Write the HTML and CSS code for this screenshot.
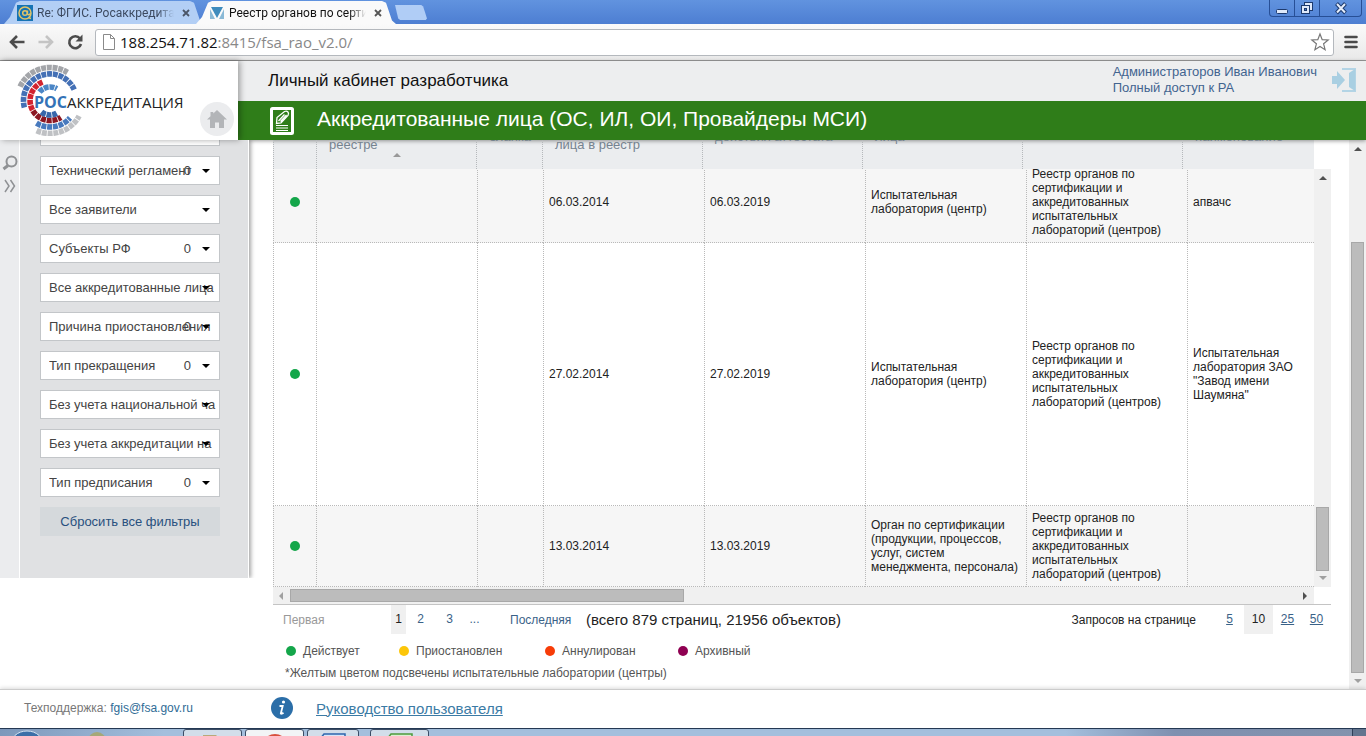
FILE: index.html
```html
<!DOCTYPE html>
<html lang="ru">
<head>
<meta charset="utf-8">
<title>Реестр органов по сертификации</title>
<link rel="stylesheet" href="styles.css">
</head>
<body>
<div class="tabstrip">
  <div class="tab">
    <svg class="tab-icon" viewBox="0 0 16 16"><rect width="16" height="16" fill="#1673b4"/><circle cx="8" cy="8" r="6" fill="none" stroke="#e0c46a" stroke-width="1.5"/><circle cx="8" cy="8" r="2.3" fill="none" stroke="#e0c46a" stroke-width="1.5"/><path d="M10.5 5.5v3.5q1.5 2 3-1M11 12.5l3 1" fill="none" stroke="#e0c46a" stroke-width="1.4"/></svg>
    <span class="tab-title">Re: ФГИС. Росаккредитация</span>
    <button class="tab-close" aria-label="Закрыть вкладку"><svg viewBox="0 0 8 8"><path d="M1 1l6 6M7 1l-6 6" stroke="#4b5668" stroke-width="1.8"/></svg></button>
  </div>
  <div class="tab tab-active">
    <svg class="tab-icon" viewBox="0 0 16 16"><path d="M2 2h12L8 13z" fill="#3f8cbd"/><path d="M1 4l5 10H1zM15 4l-5 10h5z" fill="#8ab9d6"/></svg>
    <span class="tab-title">Реестр органов по сертификации</span>
    <button class="tab-close" aria-label="Закрыть вкладку"><svg viewBox="0 0 8 8"><path d="M1 1l6 6M7 1l-6 6" stroke="#555" stroke-width="1.8"/></svg></button>
  </div>
  <button class="tab-new" aria-label="Новая вкладка"></button>
  <div class="window-buttons">
    <button aria-label="Свернуть"><svg viewBox="0 0 14 14"><rect x="1.5" y="8.500" width="11" height="4" rx="1" fill="#dfe9fa" stroke="#1d3a6e"/></svg></button>
    <button aria-label="Развернуть"><svg viewBox="0 0 14 14"><rect x="4.500" y="1.500" width="8" height="8" fill="#dfe9fa" stroke="#1d3a6e"/><rect x="1.500" y="4.500" width="8" height="8" fill="#dfe9fa" stroke="#1d3a6e"/><rect x="4.500" y="7.500" width="2" height="2" fill="#4b7ccf" stroke="#1d3a6e"/></svg></button>
    <button class="window-close" aria-label="Закрыть"><svg viewBox="0 0 14 14"><path d="M2.500 2.500l9 9.500M11.500 2.500l-9 9.500" stroke="#1d3a6e" stroke-width="4"/><path d="M3 3l8 8.500M11 3l-8 8.500" stroke="#e4edfb" stroke-width="2"/></svg></button>
  </div>
</div>
<div class="toolbar">
  <button class="nav-button" aria-label="Назад"><svg viewBox="0 0 18 18"><path d="M16.500 9H3.500M9 3L3 9l6 6" fill="none" stroke="#4c4c4c" stroke-width="2.600"/></svg></button>
  <button class="nav-button" aria-label="Вперёд"><svg viewBox="0 0 18 18"><path d="M1.500 9h13M9 3l6 6-6 6" fill="none" stroke="#c4c4c4" stroke-width="2.600"/></svg></button>
  <button class="nav-button" aria-label="Обновить"><svg viewBox="0 0 18 18"><path d="M14 5.500A6 6 0 1 0 15 11" fill="none" stroke="#4c4c4c" stroke-width="2.600"/><path d="M16.500 1.500v7h-7z" fill="#4c4c4c"/></svg></button>
  <div class="address">
    <svg class="address-page" viewBox="0 0 12 16"><path d="M.5.500h7l4 4v11H.500zM7.500.500v4h4" fill="#fff" stroke="#8a8a8a"/></svg>
    <a class="address-url" href="#"><span class="address-host">188.254.71.82</span>:8415/fsa_rao_v2.0/</a>
    <svg class="address-star" viewBox="0 0 20 20"><path d="M10 2l2.200 5.600 6 .4-4.600 3.800 1.500 5.900L10 14.500l-5.100 3.200 1.500-5.900L1.800 8l6-.4z" fill="#fff" stroke="#777" stroke-width="1.200"/></svg>
  </div>
  <button class="menu-button" aria-label="Меню"><svg viewBox="0 0 14 14"><path d="M1.500 2h11M1.500 7h11M1.500 12h11" stroke="#4a4a4a" stroke-width="2.600" stroke-linecap="round"/></svg></button>
</div>

<header class="header">
  <div class="brand">
    <a class="logo" href="#">
      <svg class="logo-mark" viewBox="3 0 74 72">
        <g fill="none" stroke-width="5.600" stroke-dasharray="4.900 .8">
          <path d="M9.100 22.600A33 33 0 0 1 56.500 8.500" stroke="#a3a5a9"/>
          <path d="M13.400 43.400A26.500 26.500 0 0 1 63.200 25.700" stroke="#4470b5"/>
          <path d="M31.500 18A20 20 0 0 0 21.900 46.800" stroke="#d2232f"/>
          <path d="M21.900 46.800A20 20 0 0 0 49.900 53.300" stroke="#8c1722"/>
          <path d="M28.500 28A13.500 13.500 0 0 1 45.800 24.800" stroke="#4b86c6"/>
          <path d="M30.500 48A13.500 13.500 0 0 0 45.700 49.200" stroke="#3767ab"/>
          <path d="M25.400 59.200A26.500 26.500 0 0 0 59 53.900" stroke="#4779bd"/>
          <path d="M25.600 66.600A33 33 0 0 0 68.100 52" stroke="#bfc1c4"/>
        </g>
      </svg>
      <span class="logo-text"><b>РОС</b>АККРЕДИТАЦИЯ</span>
    </a>
    <a class="home" href="#" aria-label="На главную"><svg viewBox="0 0 20 18"><path d="M10 0l10 9.500h-3V18h-5v-5.500H8V18H3V9.500H0L3.500 6.200V2h2.800v1.500z" fill="#b3b5b8"/></svg></a>
  </div>
  <div class="header-main">
    <div class="cabinet">
      <span class="cabinet-title">Личный кабинет разработчика</span>
      <div class="user">
        <div class="user-text"><a href="#">Администраторов Иван Иванович</a><a href="#">Полный доступ к РА</a></div>
        <a class="logout" href="#" aria-label="Выход"><svg viewBox="0 0 24 24"><path d="M0 8h5V3l8 9-8 9v-5H0z" fill="#a9cfe2"/><path d="M10 1h13v22H10" fill="none" stroke="#b3d4e5" stroke-width="2"/><path d="M17 5l6-4v22l-6-4z" fill="#a9cfe2"/></svg></a>
      </div>
    </div>
    <div class="titlebar">
      <svg class="titlebar-icon" viewBox="0 0 24 28"><rect x="1.500" y="1.500" width="21" height="25" rx="1" fill="none" stroke="#fff" stroke-width="3"/><path d="M6.500 16.500l.5-6L14.500 4.500c3-1 5 1 3.500 4l-7 7.500zM8.500 14l6-6.500M10.500 14.500l6-6.500" fill="none" stroke="#fff" stroke-width="1.300"/><path d="M6 18.500h12M6 21h12M6 23.500h12" stroke="#fff" stroke-width="1.200"/></svg>
      <h1>Аккредитованные лица (ОС, ИЛ, ОИ, Провайдеры МСИ)</h1>
    </div>
  </div>
</header>

<div class="body">
  <aside class="sidebar">
    <div class="rail">
      <button aria-label="Поиск"><svg viewBox="0 0 16 16"><circle cx="9.500" cy="6.500" r="5" fill="none" stroke="#8f9194" stroke-width="2"/><path d="M6 10.500L1.500 14" stroke="#8f9194" stroke-width="3"/></svg></button>
      <button aria-label="Развернуть панель"><svg viewBox="0 0 16 16"><path d="M3 2l4 6-4 6M8.500 2l4 6-4 6" fill="none" stroke="#8f9194" stroke-width="1.500"/></svg></button>
    </div>
    <form class="filters">
      <div class="filter"><select aria-label="Фильтр"><option></option></select></div>
      <div class="filter"><select aria-label="Технический регламент"><option>Технический регламент</option></select><span class="count">0</span><i class="arrow"></i></div>
      <div class="filter"><select aria-label="Заявители"><option>Все заявители</option></select><i class="arrow"></i></div>
      <div class="filter"><select aria-label="Субъекты РФ"><option>Субъекты РФ</option></select><span class="count">0</span><i class="arrow"></i></div>
      <div class="filter"><select aria-label="Аккредитованные лица"><option>Все аккредитованные лица</option></select><i class="arrow"></i></div>
      <div class="filter"><select aria-label="Причина приостановления"><option>Причина приостановления</option></select><span class="count">0</span><i class="arrow"></i></div>
      <div class="filter"><select aria-label="Тип прекращения"><option>Тип прекращения</option></select><span class="count">0</span><i class="arrow"></i></div>
      <div class="filter"><select aria-label="Национальная часть"><option>Без учета национальной ча</option></select><i class="arrow"></i></div>
      <div class="filter"><select aria-label="Аккредитация"><option>Без учета аккредитации на</option></select><i class="arrow"></i></div>
      <div class="filter"><select aria-label="Тип предписания"><option>Тип предписания</option></select><span class="count">0</span><i class="arrow"></i></div>
      <button class="reset" type="button">Сбросить все фильтры</button>
    </form>
  </aside>

  <main class="main">
    <div class="grid">
      <div class="grid-head">
        <table class="head-table">
          <colgroup><col class="h-dot"><col class="h-wide"><col class="h-blank"><col class="h-wide"><col class="h-wide"><col class="h-wide"><col class="h-wide"><col></colgroup>
          <thead><tr>
            <th></th>
            <th><br><br>реестре<i class="sort"></i></th>
            <th><br>бланка</th>
            <th><br><br>лица в реестр</th>
            <th><br>действия аттестата</th>
            <th><br>лица</th>
            <th></th>
            <th><br>наименование</th>
          </tr></thead>
        </table>
      </div>
      <div class="grid-middle">
        <table class="body-table">
          <colgroup><col class="b-dot"><col class="b-wide"><col class="b-blank"><col class="b-wide"><col class="b-wide"><col class="b-wide"><col class="b-wide"><col></colgroup>
          <tbody>
            <tr class="row-short"><td><i class="dot green"></i></td><td></td><td></td><td>06.03.2014</td><td>06.03.2019</td><td>Испытательная лаборатория (центр)</td><td>Реестр органов по сертификации и аккредитованных испытательных лабораторий (центров)</td><td>апвачс</td></tr>
            <tr class="row-tall"><td><i class="dot green"></i></td><td></td><td></td><td>27.02.2014</td><td>27.02.2019</td><td>Испытательная лаборатория (центр)</td><td>Реестр органов по сертификации и аккредитованных испытательных лабораторий (центров)</td><td>Испытательная лаборатория ЗАО "Завод имени Шаумяна"</td></tr>
            <tr class="row-last"><td><i class="dot green"></i></td><td></td><td></td><td>13.03.2014</td><td>13.03.2019</td><td>Орган по сертификации (продукции, процессов, услуг, систем менеджмента, персонала)</td><td>Реестр органов по сертификации и аккредитованных испытательных лабораторий (центров)</td><td></td></tr>
          </tbody>
        </table>
        <div class="vscroll"><i class="up"></i><span class="vspace"></span><span class="grid-thumb"></span><i class="down"></i></div>
      </div>
      <div class="hscroll"><div class="htrack"><i class="left"></i><span class="hthumb"></span><i class="right"></i></div></div>
    </div>
    <div class="pager">
      <span class="first">Первая</span>
      <span class="page current">1</span><a class="page" href="#">2</a><a class="page" href="#">3</a><a class="page more" href="#">...</a>
      <a class="last" href="#">Последняя</a>
      <span class="total">(всего 879 страниц, 21956 объектов)</span>
      <div class="sizes"><span class="sizes-label">Запросов на странице</span><a href="#">5</a><span class="current">10</span><a href="#">25</a><a href="#">50</a></div>
    </div>
    <ul class="legend">
      <li class="w-one"><i class="dot green"></i>Действует</li>
      <li class="w-two"><i class="dot yellow"></i>Приостановлен</li>
      <li class="w-three"><i class="dot red"></i>Аннулирован</li>
      <li><i class="dot purple"></i>Архивный</li>
    </ul>
    <p class="note">*Желтым цветом подсвечены испытательные лаборатории (центры)</p>
  </main>
  <div class="vscroll page-scroll"><i class="up"></i><span class="page-space"></span><span class="page-thumb"></span><i class="down"></i></div>
</div>

<footer class="footer">
  <div class="support">Техподдержка: <a href="#">fgis@fsa.gov.ru</a></div>
  <svg class="info" viewBox="0 0 22 22"><circle cx="11" cy="11" r="11" fill="#2b6ea8"/><circle cx="12.500" cy="5" r="1.600" fill="#fff"/><path d="M8.500 9h3.200l-1.900 7.500q.5.800 2.700-.8" fill="none" stroke="#fff" stroke-width="1.800"/></svg>
  <a class="manual" href="#">Руководство пользователя</a>
</footer>
<div class="taskbar">
  <svg class="orb" viewBox="0 0 34 7"><ellipse cx="17" cy="17" rx="17" ry="15" fill="#3c6fa8" stroke="#d6e4f2"/></svg>
  <svg class="pin" viewBox="0 0 24 7"><circle cx="12" cy="12" r="9" fill="#a5a878"/></svg>
  <button class="task" aria-label="Папка"><svg viewBox="0 0 30 7"><path d="M5 8V5h13l3 3z" fill="#b9a978"/></svg></button>
  <button class="task task-on" aria-label="Браузер"><svg viewBox="0 0 30 7"><circle cx="15" cy="17" r="13" fill="#d8503f"/></svg></button>
  <button class="task stacked" aria-label="Документ"><svg viewBox="0 0 30 7"><path d="M2 9l4-5h21v4" fill="#d8e6f8" stroke="#2c65ad" stroke-width="1.500"/></svg></button>
  <button class="task" aria-label="Таблица"><svg viewBox="0 0 30 7"><path d="M2 9l4-5h21v4" fill="#dcefd3" stroke="#4d9b3c" stroke-width="1.500"/></svg></button>
  <span class="show-desktop"></span>
</div>
</body>
</html>
```

FILE: styles.css
```css
* { box-sizing: border-box; }
body {
  margin: 0;
  height: 100vh;
  display: flex;
  flex-direction: column;
  overflow: hidden;
  background: #fff;
  color: #222;
  font-family: "Liberation Sans", Arial, sans-serif;
  font-size: 12px;
}
a { color: #3a6288; }
button { border: 0; padding: 0; background: none; font: inherit; }
svg { display: block; }

/* Browser chrome */
.tabstrip {
  flex: none;
  height: 24px;
  display: flex;
  align-items: flex-end;
  padding-left: 4px;
  background: linear-gradient(#6193df, #4d7ed2);
  font-family: Roboto, "Noto Sans", sans-serif;
  font-size: 12px;
}
.tab {
  width: 200px;
  height: 23px;
  display: flex;
  align-items: center;
  padding: 0 14px 0 13px;
  background: #b3cff5;
  color: #3c4a60;
  clip-path: polygon(0 100%, 3% 70%, 6% 8%, 8% 0, 93% 0, 95% 8%, 98% 85%, 100% 100%);
}
.tab-active { margin-left: -8px; background: #fafafa; color: #111; }
.tab-icon { flex: none; width: 16px; height: 16px; margin-right: 4px; }
.tab-title {
  flex: 1;
  overflow: hidden;
  white-space: nowrap;
  mask-image: linear-gradient(90deg, #000 88%, transparent);
}
.tab-close { flex: none; width: 8px; height: 8px; margin-left: 8px; }
.tab-new {
  width: 32px;
  height: 15px;
  margin: 0 0 4px -1px;
  background: #b0cdf6;
  clip-path: polygon(0 0, 82% 0, 88% 10%, 100% 90%, 96% 100%, 16% 100%, 10% 90%);
}
.window-buttons {
  align-self: flex-start;
  display: flex;
  margin: 0 4px 0 auto;
  border: 1px solid #274f96;
  border-top: 0;
  border-radius: 0 0 4px 4px;
}
.window-buttons button {
  width: 25px;
  height: 16px;
  display: grid;
  place-items: center;
  border-right: 1px solid #274f96;
}
.window-buttons .window-close { width: 41px; border-right: 0; }
.window-buttons svg { width: 14px; height: 14px; }
.toolbar {
  flex: none;
  height: 37px;
  display: flex;
  align-items: center;
  padding: 0 8px;
  background: linear-gradient(#fafafa, #e9e9e9);
  border-bottom: 1px solid #9b9b9b;
}
.nav-button { width: 18px; height: 18px; margin-right: 11px; }
.address {
  flex: 1;
  height: 27px;
  display: flex;
  align-items: center;
  padding: 0 3px 0 7px;
  margin-right: 10px;
  border: 1px solid #b4b8bd;
  border-radius: 3px;
  background: #fff;
}
.address-page { width: 12px; height: 16px; margin-right: 5px; }
.address-url {
  flex: 1;
  color: #888;
  text-decoration: none;
  font: 15px "Open Sans", "Noto Sans", sans-serif;
}
.address-host { color: #111; }
.address-star { width: 20px; height: 20px; }
.menu-button { width: 14px; height: 14px; }

/* Application header */
.header {
  flex: none;
  height: 79px;
  display: flex;
  position: relative;
  box-shadow: 0 1px 4px rgba(0, 0, 0, .4);
}
.brand {
  flex: none;
  width: 238px;
  display: flex;
  align-items: flex-end;
  padding: 0 4px 4px 14px;
  background: #fff;
  box-shadow: 2px 0 6px rgba(0, 0, 0, .35);
  z-index: 1;
}
.logo { position: relative; width: 186px; height: 72px; color: #222; text-decoration: none; }
.logo-mark { width: 74px; height: 72px; }
.logo-text {
  position: absolute;
  left: 20px;
  top: 27px;
  font: 15px/22px "Open Sans", "Noto Sans", sans-serif;
}
.logo-text b { font-size: 16px; color: #3473b7; }
.home {
  width: 34px;
  height: 34px;
  display: grid;
  place-items: center;
  border-radius: 50%;
  background: #ebecee;
}
.home svg { width: 20px; height: 18px; }
.header-main { flex: 1; display: flex; flex-direction: column; }
.cabinet {
  height: 40px;
  display: flex;
  align-items: center;
  justify-content: space-between;
  padding: 0 10px 0 30px;
  background: #edeeef;
}
.cabinet-title { font-size: 17px; color: #111; }
.user { display: flex; align-items: center; gap: 15px; padding-bottom: 2px; }
.user-text { display: flex; flex-direction: column; font-size: 13px; line-height: 16px; }
.user a { color: #42648f; text-decoration: none; }
.logout svg { width: 24px; height: 24px; }
.titlebar {
  flex: 1;
  display: flex;
  align-items: center;
  gap: 23px;
  padding-left: 32px;
  background: #2f7d19;
}
.titlebar-icon { width: 24px; height: 28px; }
h1 { margin: 0; padding-bottom: 3px; font-size: 21px; line-height: 26px; font-weight: 400; color: #fff; }

/* Sidebar */
.body { flex: 1; min-height: 0; display: flex; overflow: hidden; }
.sidebar {
  flex: none;
  align-self: flex-start;
  display: flex;
  box-shadow: 2px 0 4px rgba(0, 0, 0, .35);
  clip-path: inset(0 -8px 0 0);
}
.rail {
  width: 20px;
  display: flex;
  flex-direction: column;
  gap: 7px;
  padding: 15px 2px;
  background: #ebecee;
  border-right: 1px solid #fff;
}
.rail svg { width: 16px; height: 16px; }
.filters {
  width: 229px;
  display: flex;
  flex-direction: column;
  gap: 10px;
  padding: 0 28px 42px 20px;
  background: #e0e1e3;
  border-right: 1px solid #fff;
}
.filter { position: relative; height: 29px; }
.filter:first-child { margin-top: -23px; }
.filter select {
  width: 100%;
  height: 100%;
  padding: 0 0 0 8px;
  border: 1px solid #c3c6c9;
  border-radius: 0;
  appearance: none;
  background: #fff;
  color: #444;
  font: 13px "Liberation Sans", Arial, sans-serif;
}
.count { position: absolute; right: 29px; top: 7px; font-size: 13px; line-height: 15px; color: #444; pointer-events: none; }
.arrow {
  position: absolute;
  right: 10px;
  top: 13px;
  border: 4px solid transparent;
  border-top-color: #000;
  border-bottom: 0;
  pointer-events: none;
}
.reset { height: 29px; background: #d5d9dc; color: #28507e; font-size: 13px; }

/* Grid */
.main { flex: 1; min-width: 0; padding: 0 18px 0 24px; }
.grid { border-bottom: 1px solid #c4c4c4; }
.grid-head { margin: -53px 17px 0 0; background: #ebedef; }
table { width: 100%; table-layout: fixed; border-collapse: separate; border-spacing: 0; }
.h-dot { width: 43px; }
.h-wide { width: 160px; }
.h-blank { width: 66px; }
.b-dot { width: 43px; }
.b-wide { width: 161px; }
.b-blank { width: 66px; }
th {
  position: relative;
  height: 82px;
  padding: 1px 0 0 12px;
  border-left: 1px dotted #b5b8bb;
  text-align: left;
  vertical-align: middle;
  font-size: 13px;
  line-height: 16px;
  font-weight: 400;
  color: #76838f;
}
.sort {
  position: absolute;
  left: 76px;
  bottom: 12px;
  border: 4px solid transparent;
  border-bottom-color: #999;
  border-top: 0;
}
td {
  padding: 0 5px;
  border-left: 1px dotted #b9b9b9;
  border-bottom: 1px dotted #b9b9b9;
  line-height: 14px;
  color: #222;
}
td:first-child { padding: 0; }
td .dot { margin: 0 auto; }
.row-short { height: 78px; background: #f6f6f6; }
.row-short td { padding-top: 2px; padding-bottom: 5px; }
.row-tall { height: 263px; }
.row-last { height: 81px; background: #f6f6f6; }
.grid-middle { display: flex; overflow: hidden; }
.body-table { flex: 1; margin-top: -4px; }
.vscroll {
  flex: none;
  width: 17px;
  display: flex;
  flex-direction: column;
  align-items: center;
  padding: 7px 0;
  background: #f0f0f0;
}
.up, .down, .left, .right { flex: none; border: 4px solid transparent; }
.up { border-bottom-color: #505050; border-top: 0; }
.down { border-top-color: #a0a0a0; border-bottom: 0; }
.left { border-right-color: #a0a0a0; border-left: 0; }
.right { border-left-color: #505050; border-right: 0; }
.vspace, .page-space { flex: 1; }
.grid-thumb, .page-thumb, .hthumb { background: #bcbcbc; border: 1px solid #a8a8a8; }
.grid-thumb { width: 13px; height: 64px; margin-bottom: 5px; }
.hscroll { padding-right: 17px; }
.htrack {
  height: 17px;
  display: flex;
  align-items: center;
  padding: 0 7px 0 6px;
  background: #f0f0f0;
}
.hthumb { width: 394px; height: 13px; margin: 0 auto 0 7px; }
.page-scroll { padding-bottom: 6px; }
.page-space { flex: none; height: 17%; }
.page-thumb { flex: 1; width: 13px; margin-bottom: 6px; }

/* Pager and legend */
.pager { height: 29px; display: flex; align-items: center; color: #222; }
.pager a { text-decoration: none; }
.first { width: 118px; padding-left: 10px; color: #999; }
.page, .sizes a, .sizes .current { width: 29px; line-height: 29px; text-align: center; }
.page.current { width: 15px; background: #f0f0f0; }
.more { width: 21px; }
.last { width: 76px; margin-left: 25px; }
.total { flex: none; font-size: 15px; }
.sizes { margin-left: auto; display: flex; align-items: center; }
.sizes-label { margin-right: 19px; }
.sizes .current { background: #f0f0f0; }
.pager .sizes a { text-decoration: underline; }
.legend { display: flex; margin: 8px 0 0; padding: 0 0 0 13px; list-style: none; color: #555; line-height: 18px; }
.legend li { display: flex; align-items: center; gap: 7px; }
.w-one { width: 113px; }
.w-two { width: 146px; }
.w-three { width: 133px; }
.dot { display: block; flex: none; width: 10px; height: 10px; border-radius: 50%; }
.green { background: #14a64a; }
.yellow { background: #fcc60a; }
.red { background: #f73c08; }
.purple { background: #8f0052; }
.note { margin: 5px 0 0 12px; line-height: 16px; color: #555; }

/* Footer and taskbar */
.footer {
  flex: none;
  height: 39px;
  display: flex;
  align-items: center;
  position: relative;
  padding-bottom: 2px;
  background: #fff;
  border-top: 1px solid #ccc;
  box-shadow: 0 -1px 4px rgba(0, 0, 0, .15);
}
.support { width: 271px; padding-left: 24px; color: #777; }
.support a { color: #2f6c96; text-decoration: none; }
.info { width: 22px; height: 22px; }
.manual { margin-left: 23px; font-size: 15px; color: #3b7ba5; }
.taskbar {
  flex: none;
  height: 8px;
  display: flex;
  gap: 3px;
  overflow: hidden;
  border-top: 1px solid #263b57;
  background: linear-gradient(90deg, #7d98bb, #a4bfdd 12%, #a4bfdd 78%, #7f90b0 86%, #8393ad);
}
.orb { width: 34px; height: 7px; margin-left: 10px; }
.pin { width: 24px; height: 7px; margin: 0 71px 0 38px; }
.task {
  width: 59px;
  height: 12px;
  display: flex;
  justify-content: center;
  border: 1px solid #3b4d66;
  border-radius: 3px 3px 0 0;
  background: #d2deea;
}
.task svg { width: 30px; height: 7px; }
.task-on { background: #f2f4f6; }
.stacked { width: 52px; margin-right: 8px; }
.show-desktop { width: 14px; margin-left: auto; background: #63758f; border-left: 1px solid #2f4058; }
```
